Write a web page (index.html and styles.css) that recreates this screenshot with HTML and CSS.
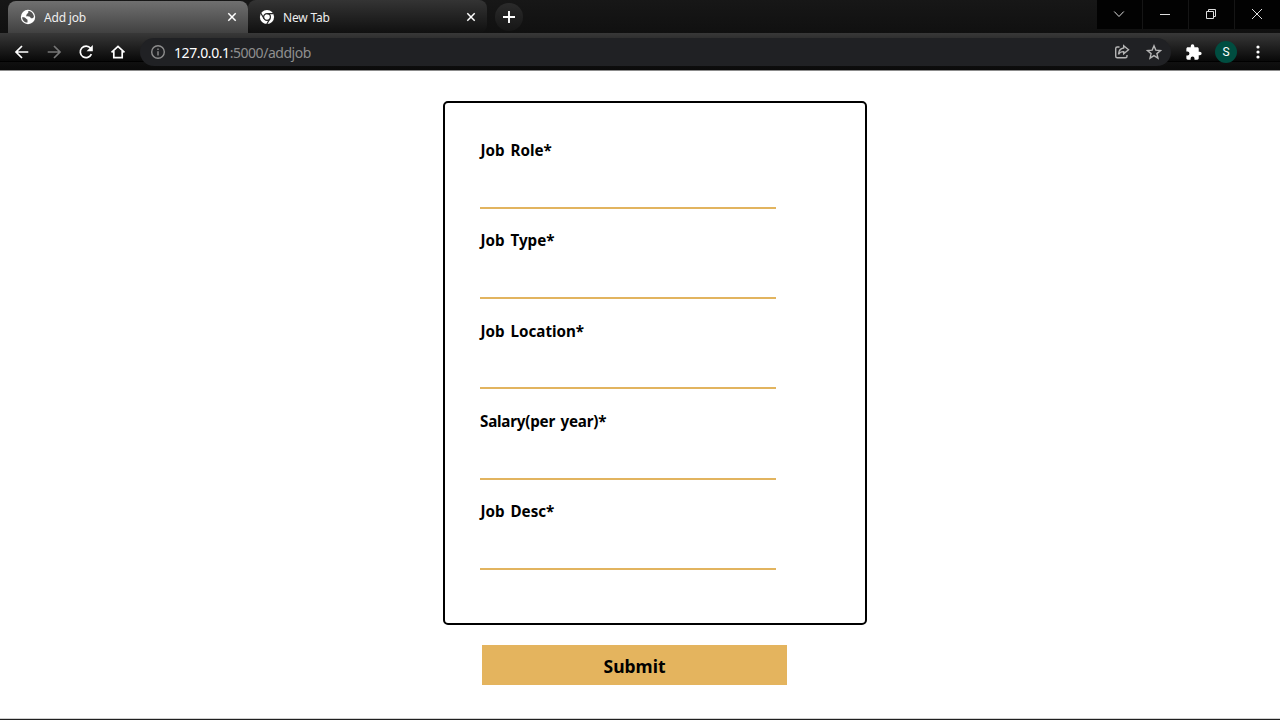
FILE: index.html
```html
<!DOCTYPE html>
<html lang="en">
<head>
<meta charset="utf-8">
<title>Add job</title>
<link rel="stylesheet" href="styles.css">
</head>
<body>
<div class="browser">
  <header class="tabstrip">
    <div class="tab tab-active">
      <svg class="favicon" viewBox="0 0 16 16"><circle cx="8" cy="8" r="7.2" fill="#fff"/><path d="M2.1 8.2c1.700-.2 3.300.3 3.900 1.200.5.9 1.500.5 1.500 1.500v2.700C4.500 13.500 2.200 11.200 2.100 8.200zM6.800 2.200l1.500-.1v1.400c0 1-1.700 1-1.700 2s-.8 1.200-.2 1.700c.9.7 3.700-.2 4 1.200.3 1 1.600 1 2.600.6l.9-1C13.800 4.800 11.300 2.100 8.200 2.100z" fill="#555"/></svg>
      <span class="tab-title">Add job</span>
      <svg class="close" viewBox="0 0 10 10"><path d="M1.300 1.300l7.400 7.400M8.700 1.300L1.300 8.700"/></svg>
    </div>
    <div class="tab tab-idle">
      <svg class="favicon" viewBox="0 0 16 16"><circle cx="8" cy="8" r="7.100" fill="#fff"/><g fill="none" stroke="#252525" stroke-width="1.200"><circle cx="8" cy="8" r="3.400"/><path d="M8 4.600h6.400M5.100 9.700L1.900 4.200M10.900 9.700l-3.200 5.500"/></g></svg>
      <span class="tab-title">New Tab</span>
      <svg class="close" viewBox="0 0 10 10"><path d="M1.300 1.300l7.400 7.400M8.700 1.300L1.300 8.700"/></svg>
    </div>
    <div class="new-tab"><svg width="14" height="14" viewBox="0 0 14 14"><path d="M7 1v12M1 7h12" stroke="#fff" stroke-width="1.900"/></svg></div>
    <div class="window-controls">
      <div class="control"><svg width="12" height="12" viewBox="0 0 12 12"><path d="M1.200 3.500L6 8.500l4.800-5"/></svg></div>
      <div class="control"><svg width="12" height="12" viewBox="0 0 12 12"><path d="M1 6.500h10"/></svg></div>
      <div class="control"><svg width="12" height="12" viewBox="0 0 12 12"><path d="M1.500 3.500h7v7h-7zM3.500 3.500v-2h7v7h-2"/></svg></div>
      <div class="control"><svg width="12" height="12" viewBox="0 0 12 12"><path d="M1 1l10 10M11 1L1 11"/></svg></div>
    </div>
  </header>
  <nav class="toolbar">
    <div class="nav-buttons">
      <svg viewBox="0 0 16 16"><path d="M14.300 8H2.200M8 2L2 8l6 6"/></svg>
      <svg class="muted" viewBox="0 0 16 16"><path d="M1.700 8h12.100M8 2l6 6-6 6"/></svg>
      <svg viewBox="0 0 16 16"><path d="M13.400 10.200A5.800 5.800 0 1 1 12.600 4.200"/><path d="M14.800 1v6.200H8.600z" fill="#fff" stroke="none"/></svg>
      <svg viewBox="0 0 16 16"><path d="M1.500 8.300L8 2.300l6.500 6M3.800 7v6.700h8.400V7"/></svg>
    </div>
    <div class="omnibox">
      <svg class="info" viewBox="0 0 16 16"><circle cx="8" cy="8" r="6.300"/><path d="M8 7.200v4.300M8 4.400v1.500"/></svg>
      <span class="url"><span class="host">127.0.0.1</span>:5000/addjob</span>
      <svg class="share" viewBox="0 0 16 16"><path d="M5.500 3H3.200Q1.700 3 1.700 4.500v7.800Q1.700 13.800 3.200 13.800h8.300q1.500 0 1.500-1.500V11"/><path d="M9.700 1.800l4.800 4-4.800 4V7.600Q6 7.500 4.500 10.300 4.800 4.600 9.700 4z"/></svg>
      <svg class="star" viewBox="0 0 16 16"><path d="M8 1.800l1.800 4.300 4.700.4-3.600 3.100 1.100 4.600L8 11.700l-4 2.500 1.100-4.600-3.600-3.100 4.700-.4z"/></svg>
    </div>
    <svg class="puzzle" viewBox="1.500 0.500 22 22"><path d="M20.500 11H19V7c0-1.100-.9-2-2-2h-4V3.500a2.500 2.500 0 0 0-5 0V5H4c-1.100 0-2 .9-2 2v3.800h1.500a2.700 2.700 0 0 1 0 5.400H2V20c0 1.100.9 2 2 2h3.800v-1.500a2.700 2.700 0 0 1 5.400 0V22H17c1.100 0 2-.9 2-2v-4h1.500a2.500 2.500 0 0 0 0-5z"/></svg>
    <div class="avatar">S</div>
    <svg class="menu" viewBox="0 0 4 16"><circle cx="2" cy="3" r="1.600"/><circle cx="2" cy="8" r="1.600"/><circle cx="2" cy="13" r="1.600"/></svg>
  </nav>
  <main class="page">
    <form class="job-form">
      <div class="card">
        <label class="field"><span class="label">Job Role*</span><input class="entry" type="text"></label>
        <label class="field"><span class="label">Job Type*</span><input class="entry" type="text"></label>
        <label class="field"><span class="label">Job Location*</span><input class="entry" type="text"></label>
        <label class="field"><span class="label label-long">Salary(per year)*</span><input class="entry" type="text"></label>
        <label class="field"><span class="label">Job Desc*</span><input class="entry" type="text"></label>
      </div>
      <button class="submit" type="button">Submit</button>
    </form>
  </main>
</div>
</body>
</html>
```

FILE: styles.css
```css
* { box-sizing: border-box; }
body { margin: 0; font-family: "Noto Sans", "Open Sans", sans-serif; overflow: hidden; }
svg { display: block; flex: none; }
.browser { width: 1280px; height: 720px; display: flex; flex-direction: column; background: #fff; }
.tabstrip { height: 33px; flex: none; display: flex; background: linear-gradient(#171717, #101010); padding-left: 8px; }
.tab { display: flex; align-items: center; height: 33px; color: #eee; font-size: 12px; }
.tab-active { width: 240px; margin-top: 1px; height: 32px; padding: 0 11px 0 12px; border-radius: 8px 8px 0 0; background: linear-gradient(#707070, #414141); }
.tab-idle { width: 239px; padding: 1px 11px 0 11px; border-radius: 8px; background: linear-gradient(#343434, #101010); }
.favicon { width: 16px; height: 16px; }
.tab-title { flex: 1; margin-left: 8px; letter-spacing: -0.2px; }
.close { width: 10px; height: 10px; fill: none; stroke: #fff; stroke-width: 1.5; }
.new-tab { width: 28px; height: 28px; margin: 3px 0 0 8px; border-radius: 50%; background: linear-gradient(#2b2b2b, #161616); display: flex; align-items: center; justify-content: center; }
.window-controls { display: flex; gap: 1px; margin-left: auto; height: 29px; background: #151515; }
.control { width: 45px; padding: 0 2px 1px 0; background: #020202; display: flex; align-items: center; justify-content: center; }
.control svg { fill: none; stroke: #ddd; stroke-width: 1; }
.toolbar { height: 38px; flex: none; display: flex; align-items: center; padding: 1px 20px 0 14px; border-bottom: 1px solid #8c8c8c; background: linear-gradient(#383838 0, #080808 28px, #000 28px, #000 29px, #101010 29px, #0b0b0b 36px); }
.nav-buttons { display: flex; gap: 16px; }
.nav-buttons svg { width: 16px; height: 16px; fill: none; stroke: #fff; stroke-width: 1.7; }
.nav-buttons .muted { stroke: #777; }
.omnibox { width: 1031px; height: 28px; margin-left: 14px; padding: 0 9px 0 10px; border-radius: 14px; background: #202124; display: flex; align-items: center; }
.omnibox svg { width: 16px; height: 16px; fill: none; stroke: #b5b5b5; stroke-width: 1.4; }
.omnibox .info { stroke: #8e8e8e; }
.url { flex: 1; margin-left: 8px; font-size: 14px; color: #8f8f8f; letter-spacing: -0.47px; }
.host { color: #fff; letter-spacing: -0.4px; }
.omnibox .star { margin-left: 16px; }
.puzzle { width: 16px; height: 16px; margin-left: 15px; fill: #fff; }
.avatar { width: 22px; height: 22px; margin-left: 13px; border-radius: 50%; background: #004d40; color: #fff; font: 12px/22px Roboto, sans-serif; text-align: center; }
.menu { width: 4px; height: 16px; margin-left: 19px; fill: #fff; }
.page { flex: 1; padding: 30px 0 0 443px; background: #fff; border-bottom: 1px solid #202020; box-shadow: inset 0 -1px #d0d0d0; }
.card { width: 424px; height: 524px; border: 2px solid #000; border-radius: 5px; padding: 15.55px 35px; }
.field { display: flex; flex-direction: column; justify-content: space-between; width: 296px; height: 90.3px; padding-top: 20.500px; }
.label { padding-left: 0.6px; font-size: 15.2px; line-height: 22px; font-weight: 700; word-spacing: 1.8px; color: #000; }
.label-long { padding-left: 0; letter-spacing: -0.22px; }
.entry { width: 296px; height: 32px; padding: 0; border: 0; border-bottom: 2px solid #e2b45f; background: transparent; outline: 0; }
.submit { display: block; width: 305px; height: 40px; margin: 20px 0 0 39px; padding: 1px 0 0; border: 0; background: #e4b45e; color: #000; font: 700 17.5px "Noto Sans", sans-serif; }
```
